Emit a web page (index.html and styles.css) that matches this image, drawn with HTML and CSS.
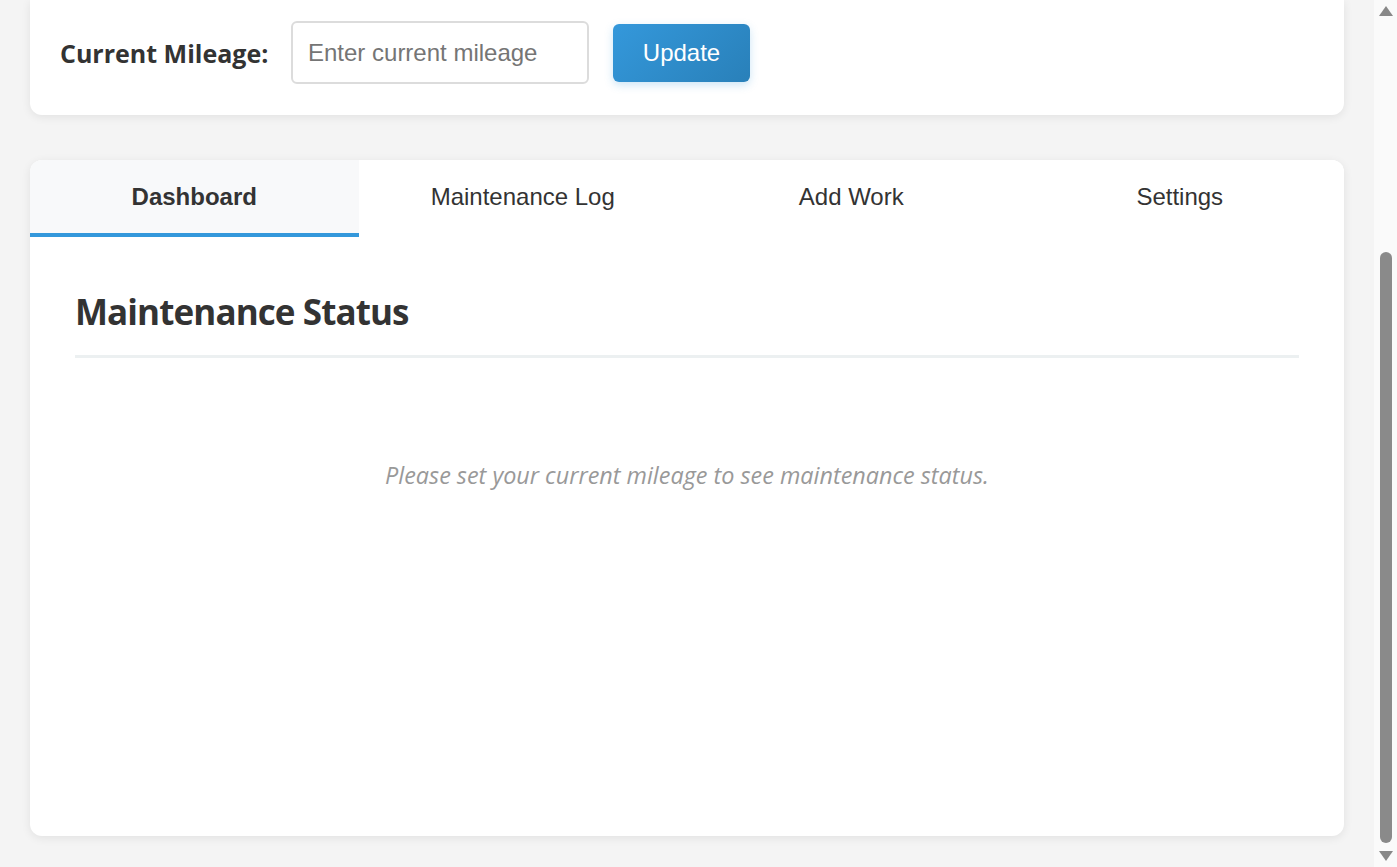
FILE: index.html
```html
<!DOCTYPE html>
<html lang="en">
<head>
<meta charset="utf-8">
<title>Vehicle Maintenance</title>
<link rel="stylesheet" href="styles.css">
</head>
<body>
<div class="main">
  <section class="card mileage-card">
    <div class="mileage-row">
      <label class="mileage-label" for="mileage">Current Mileage:</label>
      <input class="mileage-input" id="mileage" type="text" placeholder="Enter current mileage">
      <button class="btn-update" type="button">Update</button>
    </div>
  </section>

  <section class="card tabs-card">
    <nav class="tabs">
      <button class="tab active" type="button">Dashboard</button>
      <button class="tab" type="button">Maintenance Log</button>
      <button class="tab" type="button">Add Work</button>
      <button class="tab" type="button">Settings</button>
    </nav>
    <div class="panel">
      <h2 class="panel-title">Maintenance Status</h2>
      <p class="empty">Please set your current mileage to see maintenance status.</p>
    </div>
  </section>
</div>
<div class="scrollbar">
  <div class="sb-arrow up"></div>
  <div class="sb-track"><div class="sb-thumb"></div></div>
  <div class="sb-arrow down"></div>
</div>
</body>
</html>
```

FILE: styles.css
```css
html, body {
  margin: 0;
  padding: 0;
  height: 100%;
  overflow: hidden;
}
body {
  display: flex;
  background: #f4f4f4;
  font-family: "Open Sans", "Noto Sans", sans-serif;
  color: #333;
}
.main {
  flex: 1;
  padding: 0 30px;
  display: flex;
  flex-direction: column;
}
.card {
  background: #fff;
  border-radius: 12px;
  box-shadow: 0 2px 10px rgba(0, 0, 0, 0.08);
}
.mileage-card {
  border-radius: 0 0 12px 12px;
  padding: 21px 30px 31px;
}
.mileage-row {
  display: flex;
  align-items: center;
}
.mileage-label {
  width: 231px;
  font-weight: 700;
  font-size: 25px;
  color: #333;
}
.mileage-input {
  box-sizing: border-box;
  width: 298px;
  height: 63px;
  border: 2px solid #dcdcdc;
  border-radius: 6px;
  padding: 0 15px;
  font-family: "Liberation Sans", Arial, sans-serif;
  font-size: 24px;
  color: #333;
  outline: none;
}
.mileage-input::placeholder {
  color: #757575;
}
.btn-update {
  margin-left: 24px;
  width: 137px;
  height: 58px;
  border: none;
  border-radius: 6px;
  background: linear-gradient(135deg, #3498db, #2980b9);
  color: #fff;
  font-family: "Liberation Sans", Arial, sans-serif;
  font-size: 24px;
  box-shadow: 0 3px 8px rgba(52, 152, 219, 0.25);
  cursor: pointer;
}
.tabs-card {
  margin-top: 45px;
  height: 676px;
  overflow: hidden;
  display: flex;
  flex-direction: column;
}
.tabs {
  display: grid;
  grid-template-columns: repeat(4, 1fr);
  border-bottom: 1px solid #f3f3f3;
  height: 76px;
}
.tab {
  height: 77px;
  border: none;
  border-bottom: 4px solid transparent;
  background: #fff;
  font-family: "Liberation Sans", Arial, sans-serif;
  font-size: 24px;
  color: #333;
  padding: 0;
  cursor: pointer;
}
.tab.active {
  background: #f8f9fa;
  border-bottom-color: #3498db;
  font-weight: 700;
}
.panel {
  padding: 53px 45px 45px;
}
.panel-title {
  margin: 0;
  font-size: 35px;
  letter-spacing: -0.9px;
  line-height: 44px;
  font-weight: 700;
  color: #333;
  padding-bottom: 21px;
  border-bottom: 3px solid #ecf0f1;
}
.empty {
  margin: 0;
  padding-top: 101px;
  text-align: center;
  font-style: italic;
  font-size: 23.4px;
  color: #999;
}
.scrollbar {
  width: 23px;
  background: #fafafa;
  display: flex;
  flex-direction: column;
  align-items: center;
}
.sb-arrow {
  width: 0;
  height: 0;
  border-left: 7px solid transparent;
  border-right: 7px solid transparent;
}
.sb-arrow.up {
  margin-top: 6px;
  border-bottom: 10px solid #888;
}
.sb-arrow.down {
  margin-bottom: 6px;
  border-top: 10px solid #888;
}
.sb-track {
  flex: 1;
  width: 100%;
  display: flex;
  flex-direction: column;
  align-items: center;
  justify-content: flex-end;
  padding-bottom: 8px;
}
.sb-thumb {
  width: 12px;
  height: 591px;
  border-radius: 6px;
  background: #8a8a8a;
}
```
